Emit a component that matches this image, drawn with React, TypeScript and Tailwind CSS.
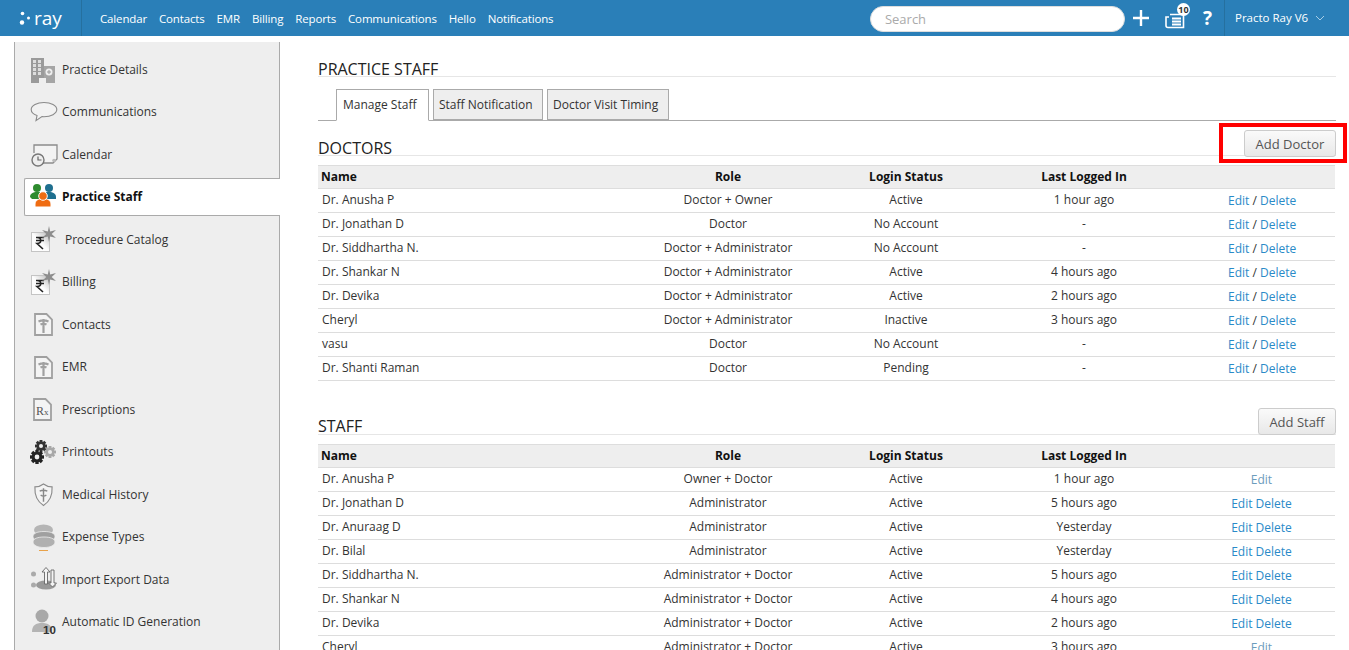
import React from "react";

const G = "#9a9a9a";

const IconBuilding = () => (
  <svg width="26" height="26" viewBox="0 0 26 26">
    <rect x="1" y="1" width="13" height="25" fill={G} />
    {[3, 7, 11].flatMap((y) => [3, 8].map((x) => <rect key={x + "-" + y} x={x} y={y} width="3" height="3" fill="#ddd" />))}
    <rect x="3" y="15" width="3" height="3" fill="#ddd" />
    <rect x="8" y="15" width="3" height="3" fill="#ddd" />
    <rect x="14" y="9" width="11" height="17" fill="#a5a5a5" />
    <circle cx="19" cy="15" r="3.500" fill="#eee" />
    <path d="M19 13v4M17 15h4" stroke={G} strokeWidth="1" />
    <rect x="9" y="21" width="7" height="5" fill="#eee" />
  </svg>
);
const IconChat = () => (
  <svg width="28" height="22" viewBox="0 0 28 22">
    <path d="M14 1.500C7 1.500 1.200 4.600 1.200 8.600c0 2.600 2.400 4.800 5.800 6l-1 5 6-4c.7.100 1.300.100 2 .100 7 0 12.800-3.100 12.800-7.100S21 1.500 14 1.500z" fill="#f2f2f2" stroke="#8a8a8a" strokeWidth="1.100" />
  </svg>
);
const IconCalendar = () => (
  <svg width="28" height="24" viewBox="0 0 28 24">
    <path d="M4 10V2h23v14l-4 4H13" fill="#f3f3f3" stroke="#8c8c8c" strokeWidth="1.300" />
    <circle cx="24" cy="17.500" r="1.800" fill="#bbb" />
    <circle cx="8" cy="17" r="6" fill="#eee" stroke="#777" strokeWidth="1.400" />
    <path d="M8 13.500V17h3.500" fill="none" stroke="#666" strokeWidth="1.200" />
  </svg>
);
const IconStaff = () => (
  <svg width="26" height="28" viewBox="0 0 26 28">
    <circle cx="7" cy="5" r="4" fill="#2e8b2e" />
    <path d="M0 14c0-3.500 3-5 7-5s7 1.500 7 5v2H2z" fill="#2e8b2e" />
    <circle cx="19" cy="5" r="4" fill="#1f6f8f" />
    <path d="M12 14c0-3.500 3-5 7-5s7 1.500 7 5v2H14z" fill="#1f6f8f" />
    <path d="M5 21c0-3.500 3.500-5.500 8-5.500s8 2 8 5.500v3H5z" fill="#ef6c12" stroke="#fff" strokeWidth="1" />
    <circle cx="13" cy="13" r="4.300" fill="#ef6c12" stroke="#fff" strokeWidth="1" />
  </svg>
);
const IconRupee = () => (
  <svg width="26" height="27" viewBox="0 0 26 27">
    <defs>
      <linearGradient id="rg" x1="0" y1="1" x2="1" y2="0">
        <stop offset="0.500" stopColor="#fdfdfd" />
        <stop offset="1" stopColor="#b8b8b8" />
      </linearGradient>
    </defs>
    <rect x="0.500" y="6.500" width="18" height="19" fill="url(#rg)" stroke="#c4c4c4" />
    <path d="M5 11.500h8M5 14.500h8M6 11.500c5 0 5 6 0 6l6 5.500" fill="none" stroke="#222" strokeWidth="1.600" />
    <path d="M18 0l1.200 5.500 5.800-1.500-4.300 4 4.300 4-5.800-1.500-1.200 5.500-1.200-5.500-5.800 1.500 4.300-4-4.300-4 5.800 1.500z" fill="#8d8d8d" />
  </svg>
);
const IconDoc = ({ rx }: { rx?: boolean }) => (
  <svg width="19" height="23" viewBox="0 0 19 23">
    <path d="M1 1h11.500L18 6.500V22H1z" fill="#f4f4f4" stroke="#a0a0a0" strokeWidth="1.800" />
    {rx ? (
      <text x="3" y="17" fontFamily="'Liberation Serif',serif" fontSize="12" fill="#555">
        R<tspan fontSize="9">x</tspan>
      </text>
    ) : (
      <path d="M9.500 6v14M4.500 8.500c3.300-1.500 6.700-1.500 10 0M6.500 11.500c2-1 4-1 6 0" fill="none" stroke="#a0a0a0" strokeWidth="2.200" />
    )}
  </svg>
);
const Gear = ({ x, y, r, c }: { x: number; y: number; r: number; c: string }) => (
  <g>
    {[0, 45, 90, 135].map((a) => (
      <rect key={a} x={x - r} y={y - r * 0.24} width={r * 2} height={r * 0.48} fill={c} transform={`rotate(${a} ${x} ${y})`} />
    ))}
    <circle cx={x} cy={y} r={r * 0.75} fill={c} />
    <circle cx={x} cy={y} r={r * 0.34} fill="#eee" />
  </g>
);
const IconGears = () => (
  <svg width="26" height="25" viewBox="0 0 26 25">
    <Gear x={20} y={12} r={6} c="#a8a8a8" />
    <Gear x={11} y={6} r={6} c="#333" />
    <Gear x={7} y={17} r={7} c="#222" />
  </svg>
);
const IconShield = () => (
  <svg width="21" height="26" viewBox="0 0 22 26">
    <path d="M11 1.500c2.500 2 5.500 3 9 3 .5 9-2 15-9 19.500C4 19.500 1.500 13.500 2 4.500c3.500 0 6.500-1 9-3z" fill="#f4f4f4" stroke="#8a8a8a" strokeWidth="1.200" />
    <path d="M11 6v14M7 9c3-1.500 5-1.500 8 0M8 13c2 1.500 4 1.500 6 0" fill="none" stroke="#888" strokeWidth="1.500" />
  </svg>
);
const IconCoins = () => (
  <svg width="24" height="27" viewBox="0 0 24 27">
    <ellipse cx="11.500" cy="6" rx="9.500" ry="5.500" fill="#b5b5b5" />
    <path d="M1 12.500c0-3.500 5-5 11-5s11 1.500 11 5-5 5.500-11 5.500-11-2-11-5.500z" fill="#a0a0a0" stroke="#eee" strokeWidth=".8" />
    <path d="M1 18c0-3.500 5-5 11-5s11 1.500 11 5-5 5.500-11 5.500S1 21.500 1 18z" fill="#b0b0b0" stroke="#eee" strokeWidth=".8" />
    <path d="M7 26.500h9" stroke="#e8a24a" strokeWidth="1" />
  </svg>
);
const IconImport = () => (
  <svg width="32" height="26" viewBox="0 0 32 26">
    <circle cx="3.500" cy="7" r="2.500" fill="#aaa" />
    <circle cx="3.500" cy="18" r="2.500" fill="#aaa" />
    <ellipse cx="16" cy="18" rx="10" ry="4.500" fill="#999" />
    <path d="M14.500 17V5H12l4-4.500L20 5h-2.500v12z" fill="#f4f4f4" stroke="#666" strokeWidth=".9" />
    <path d="M24 3v13h2.500L22.500 20 18.500 16H21V3z" fill="#f4f4f4" stroke="#666" strokeWidth=".9" />
  </svg>
);
const IconPerson = () => (
  <svg width="26" height="27" viewBox="0 0 26 27">
    <circle cx="11" cy="7" r="6.500" fill="#a8a8a8" />
    <path d="M1 23c0-7 4-9 10-9s10 2 10 9z" fill="#b4b4b4" />
    <text x="12" y="25" fontFamily="'Liberation Sans',sans-serif" fontSize="11.500" fontWeight="700" fill="#333">10</text>
  </svg>
);

type Item = { label: string; icon: React.ReactNode; pad?: string; icls?: string; active?: boolean };
const items: Item[] = [
  { label: "Practice Details", icon: <IconBuilding /> },
  { label: "Communications", icon: <IconChat /> },
  { label: "Calendar", icon: <IconCalendar /> },
  { label: "Practice Staff", icon: <IconStaff />, active: true },
  { label: "Procedure Catalog", icon: <IconRupee />, pad: "pl-[3px]", icls: "pl-[1px]" },
  { label: "Billing", icon: <IconRupee />, icls: "pl-[1px]" },
  { label: "Contacts", icon: <IconDoc />, icls: "pl-[4px]" },
  { label: "EMR", icon: <IconDoc />, icls: "pl-[4px]" },
  { label: "Prescriptions", icon: <IconDoc rx />, icls: "pl-[3px]" },
  { label: "Printouts", icon: <IconGears /> },
  { label: "Medical History", icon: <IconShield />, icls: "pl-[3px]" },
  { label: "Expense Types", icon: <IconCoins />, icls: "pl-[2px]" },
  { label: "Import Export Data", icon: <IconImport /> },
  { label: "Automatic ID Generation", icon: <IconPerson />, icls: "pl-[1px]" },
];

const nav = ["Calendar", "Contacts", "EMR", "Billing", "Reports", "Communications", "Hello", "Notifications"];

const doctors = [
  ["Dr. Anusha P", "Doctor + Owner", "Active", "1 hour ago"],
  ["Dr. Jonathan D", "Doctor", "No Account", "-"],
  ["Dr. Siddhartha N.", "Doctor + Administrator", "No Account", "-"],
  ["Dr. Shankar N", "Doctor + Administrator", "Active", "4 hours ago"],
  ["Dr. Devika", "Doctor + Administrator", "Active", "2 hours ago"],
  ["Cheryl", "Doctor + Administrator", "Inactive", "3 hours ago"],
  ["vasu", "Doctor", "No Account", "-"],
  ["Dr. Shanti Raman", "Doctor", "Pending", "-"],
];
const staff = [
  ["Dr. Anusha P", "Owner + Doctor", "Active", "1 hour ago", "e"],
  ["Dr. Jonathan D", "Administrator", "Active", "5 hours ago"],
  ["Dr. Anuraag D", "Administrator", "Active", "Yesterday"],
  ["Dr. Bilal", "Administrator", "Active", "Yesterday"],
  ["Dr. Siddhartha N.", "Administrator + Doctor", "Active", "5 hours ago"],
  ["Dr. Shankar N", "Administrator + Doctor", "Active", "4 hours ago"],
  ["Dr. Devika", "Administrator + Doctor", "Active", "2 hours ago"],
  ["Cheryl", "Administrator + Doctor", "Active", "3 hours ago", "e"],
];

function DataTable({ rows, kind }: { rows: string[][]; kind: "doctor" | "staff" }) {
  return (
    <table className="w-[1017px] table-fixed border-collapse text-[12px] text-[#333]">
      <thead>
        <tr className="h-[23px] border-b border-t border-[#dddddd] bg-[#eeeeee] font-bold text-[#111]">
          <th className="w-[304px] pl-[3px] text-left">Name</th>
          <th className="w-[212px] text-center">Role</th>
          <th className="w-[144px] text-center">Login Status</th>
          <th className="w-[212px] text-center">Last Logged In</th>
          <th />
        </tr>
      </thead>
      <tbody>
        {rows.map((r, i) => (
          <tr key={i} className="h-[24px] border-b border-[#dddddd]">
            <td className="pb-[1px] pl-[4px]">{r[0]}</td>
            <td className="pb-[1px] text-center">{r[1]}</td>
            <td className="pb-[1px] text-center">{r[2]}</td>
            <td className="pb-[1px] text-center">{r[3]}</td>
            <td className={kind === "doctor" ? "pl-[38px] pt-[1px] text-[#2a8ac8]" : "pr-[2px] pt-[1px] text-center text-[#2a8ac8]"}>
              {r[4] ? (
                <span className="text-[#6c9cbc]">Edit</span>
              ) : kind === "doctor" ? (
                <>
                  Edit <span className="text-[#333]">/</span> Delete
                </>
              ) : (
                "Edit Delete"
              )}
            </td>
          </tr>
        ))}
      </tbody>
    </table>
  );
}

const Btn = ({ children, cls }: { children: React.ReactNode; cls: string }) => (
  <button className={"h-[27px] rounded-[3px] border border-[#cccccc] bg-gradient-to-b from-[#fafafa] to-[#e8e8e8] pt-[2px] text-[13px] leading-none text-[#555] " + cls}>
    {children}
  </button>
);

export default function App() {
  return (
    <div className="h-[650px] overflow-hidden bg-white font-['Open_Sans',sans-serif] text-[12px] text-[#333]">
      <header className="flex h-[36px] items-center bg-[#2a7fb8] text-white">
        <div className="flex h-full w-[82px] items-center border-r border-[#25709f] pl-[19px]">
          <svg width="12" height="14" viewBox="0 0 12 14" className="mr-[3px]">
            <circle cx="3.500" cy="2.500" r="1.800" fill="#fff" />
            <circle cx="9.500" cy="7" r="1.500" fill="#fff" />
            <circle cx="3" cy="11.500" r="2.200" fill="#fff" />
          </svg>
          <span className="text-[19px] leading-none">ray</span>
        </div>
        <nav className="mt-[2px] flex gap-[12px] pl-[18px] text-[11.500px] tracking-[-0.15px]">
          {nav.map((n) => (
            <span key={n}>{n}</span>
          ))}
        </nav>
        <div className="ml-auto flex h-full items-center">
          <div className="mt-[2px] flex h-[26px] w-[255px] items-center rounded-[13px] border border-[#dddddd] bg-white pl-[14px] pt-[1px] text-[13px] text-[#aaaaaa]">
            Search
          </div>
          <svg width="16" height="16" viewBox="0 0 16 16" className="ml-[8px]">
            <path d="M8 0v16M0 8h16" stroke="#fff" strokeWidth="2.400" />
          </svg>
          <div className="relative ml-[17px] h-[20px] w-[20px]">
            <svg width="20" height="20" viewBox="0 0 20 20" className="absolute left-[-1px] top-[3px]">
              <path d="M5 3.500h13.500v13H3c-1 0-2-1-2-2V6h3" fill="none" stroke="#fff" strokeWidth="1.600" />
              <path d="M7 7.500h9M7 10.500h9M7 13.500h9" stroke="#fff" strokeWidth="1.800" />
            </svg>
            <span className="absolute left-[11px] top-[-5px] flex h-[13px] w-[13px] items-center justify-center rounded-full bg-white text-[9px] font-bold text-[#333]">
              10
            </span>
          </div>
          <span className="ml-[17px] text-[19px] font-bold leading-none">?</span>
          <div className="ml-[12px] flex h-full w-[125px] items-center border-l border-[#25709f] pl-[10px] text-[11.500px]">
            Practo Ray V6
            <svg width="10" height="6" viewBox="0 0 10 6" className="ml-[7px]">
              <path d="M1 1l4 4 4-4" fill="none" stroke="#a8cde6" strokeWidth="1" />
            </svg>
          </div>
        </div>
      </header>

      <div className="flex">
        <aside className="ml-[14px] mt-[6px] h-[620px] w-[266px] shrink-0 border-l border-r border-[#aaaaaa] bg-[#eeeeee] pt-[6.250px]">
          {items.map((it) =>
            it.active ? (
              <div key={it.label} className="flex h-[42.500px] items-center">
                <div className="-mr-px ml-[9px] flex h-[38px] flex-1 items-center rounded-l-[2px] border border-r-0 border-[#aaaaaa] bg-white pl-[5px] font-bold text-[#111]">
                  <span className="flex w-[32px] justify-start">{it.icon}</span>
                  <span>{it.label}</span>
                </div>
              </div>
            ) : (
              <div key={it.label} className="ml-[15px] flex h-[42.500px] items-center">
                <span className={"flex w-[32px] shrink-0 justify-start " + (it.icls ?? "")}>{it.icon}</span>
                <span className={it.pad}>{it.label}</span>
              </div>
            )
          )}
        </aside>

        <main className="ml-[38px] w-[1018px] pt-[23px]">
          <h1 className="h-[18px] border-b border-[#e6e6e6] text-[16px] uppercase leading-[21px] text-[#222]">Practice Staff</h1>

          <div className="mt-[12px] flex h-[32px] items-end gap-[4px] border-b border-[#aaaaaa] pl-[18px]">
            <div className="z-10 -mb-px flex h-[32px] w-[93px] items-center border border-[#aaaaaa] border-b-white bg-white pl-[6px]">Manage Staff</div>
            <div className="flex h-[31px] w-[110px] items-center border border-[#aaaaaa] bg-[#eeeeee] pl-[5px]">Staff Notification</div>
            <div className="flex h-[31px] w-[122px] items-center border border-[#aaaaaa] bg-[#eeeeee] pl-[5px]">Doctor Visit Timing</div>
          </div>

          <section className="relative mt-[17px]">
            <h2 className="h-[18px] border-b border-[#e6e6e6] text-[16px] uppercase leading-[20px] text-[#222]">Doctors</h2>
            <div className="absolute right-0 top-[-8px]">
              <Btn cls="w-[92px]">Add Doctor</Btn>
            </div>
            <div className="pointer-events-none absolute right-[-11px] top-[-15px] h-[40px] w-[128px] border-[4px] border-[#ff0000]" />
          </section>
          <div className="mt-[9px]">
            <DataTable rows={doctors} kind="doctor" />
          </div>

          <section className="relative mt-[36px]">
            <h2 className="h-[18px] border-b border-[#e6e6e6] text-[16px] uppercase leading-[18px] text-[#222]">Staff</h2>
            <div className="absolute right-0 top-[-9px]">
              <Btn cls="w-[78px]">Add Staff</Btn>
            </div>
          </section>
          <div className="mt-[9px]">
            <DataTable rows={staff} kind="staff" />
          </div>
        </main>
      </div>
    </div>
  );
}
